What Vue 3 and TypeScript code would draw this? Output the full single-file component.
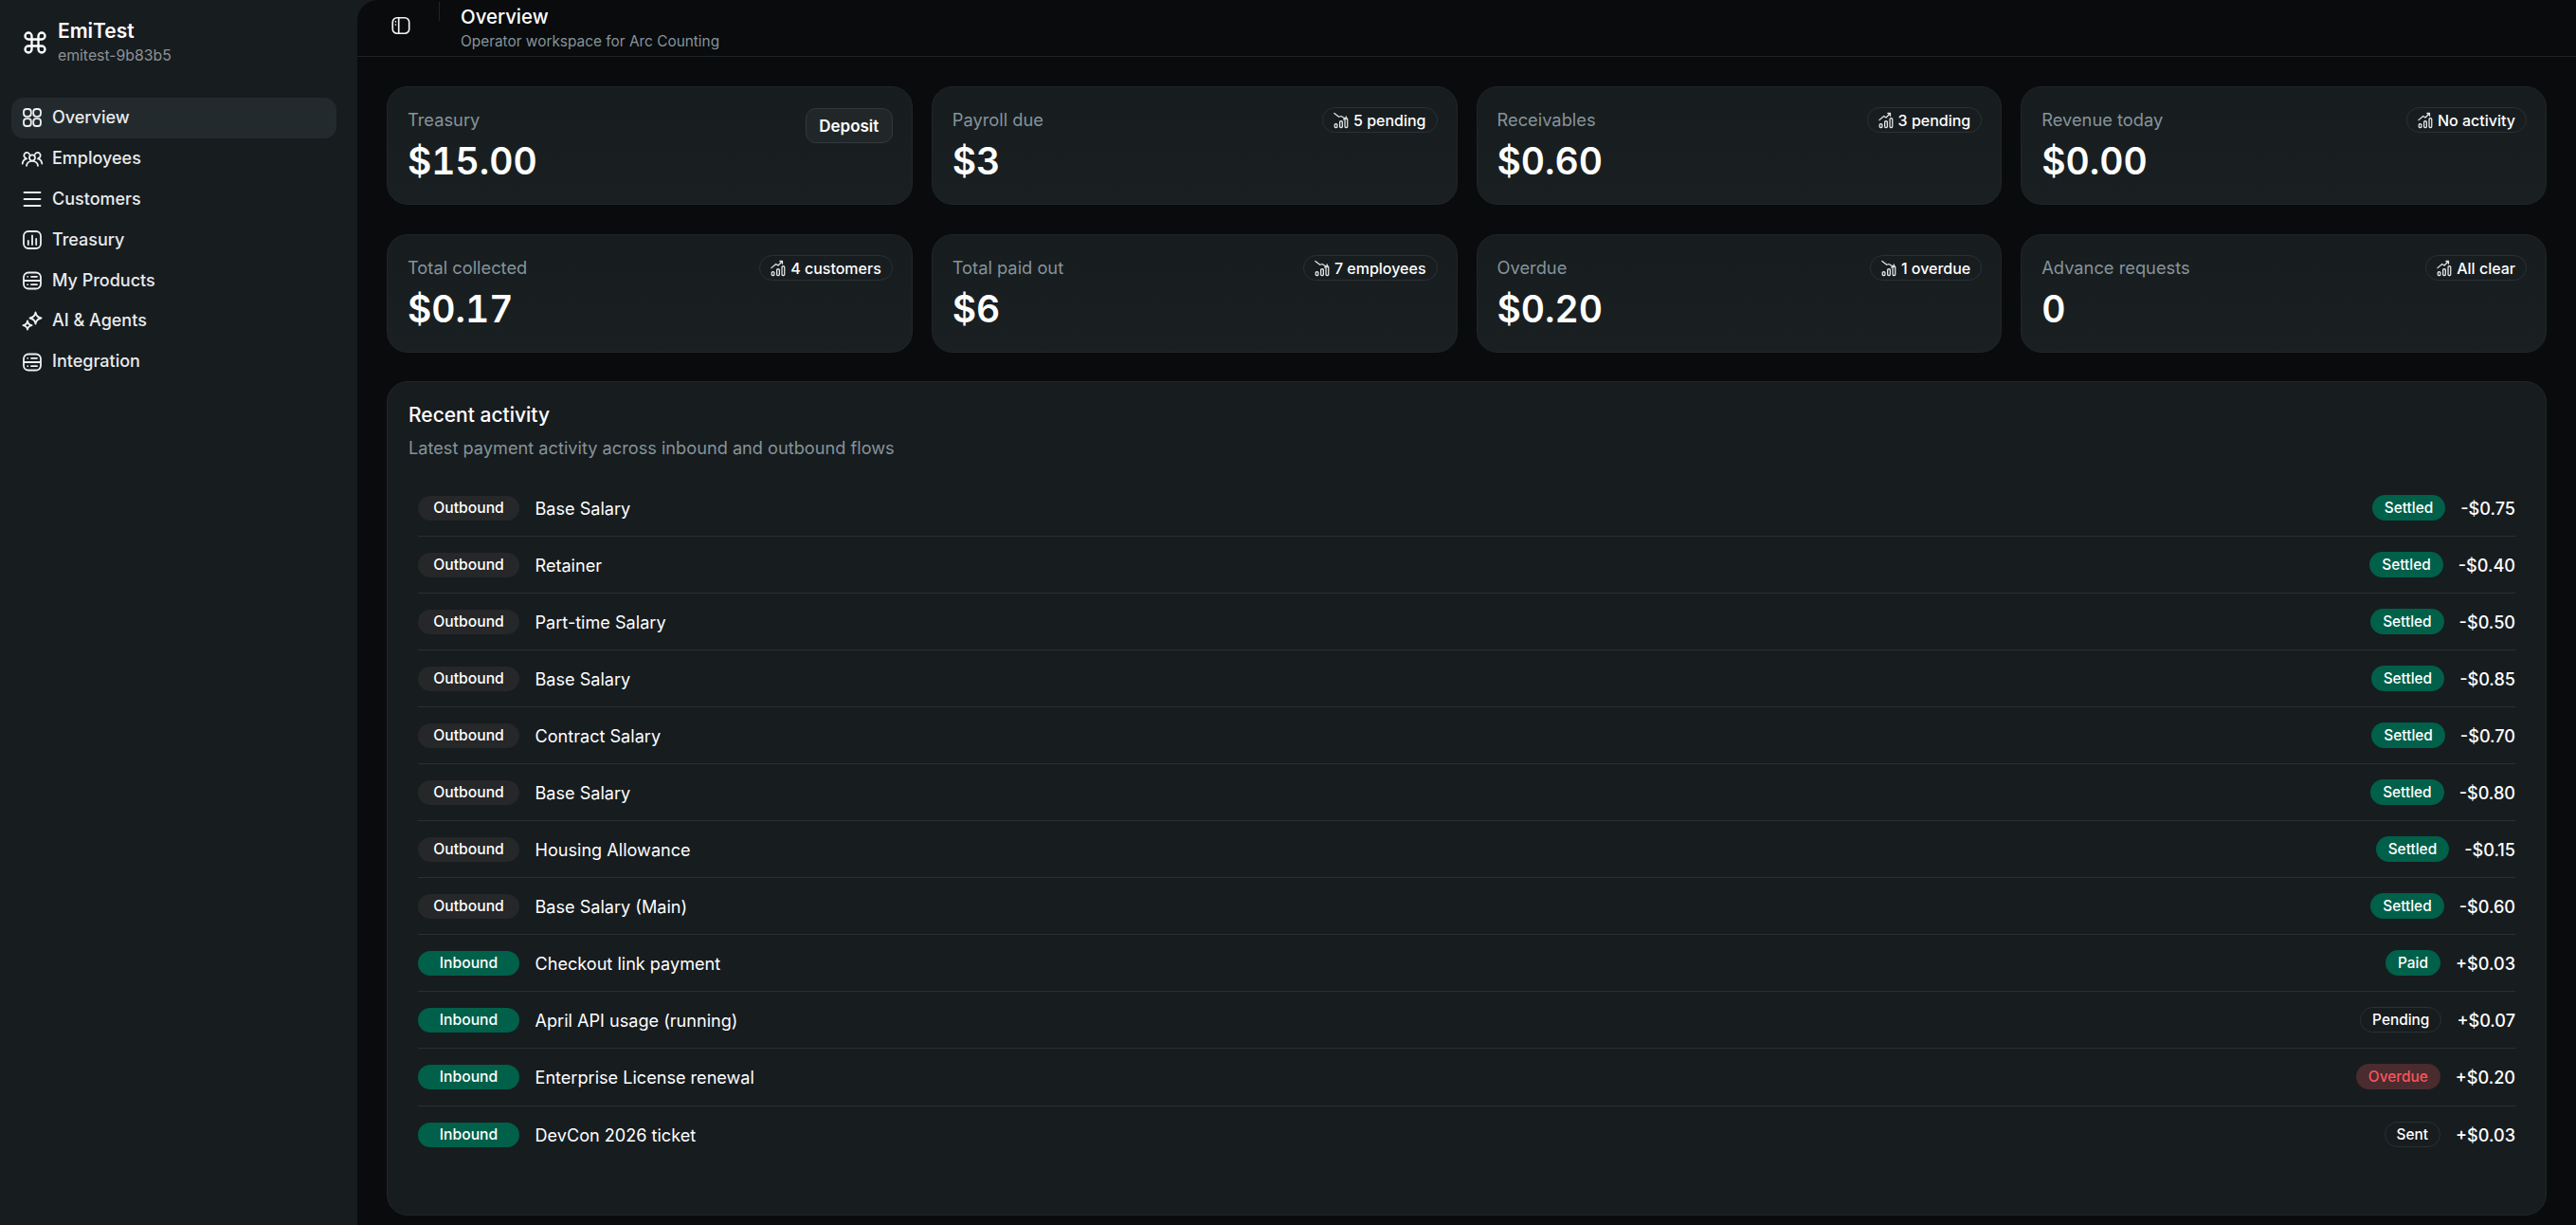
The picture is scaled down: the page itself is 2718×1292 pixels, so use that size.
<script setup lang="ts">
type IconName = 'grid' | 'users' | 'menu' | 'chart' | 'server' | 'spark' | 'panel' | 'up' | 'down' | 'command'

const rr = (x: number, y: number, w: number, h: number, r: number): string =>
  `M${x + r} ${y}h${w - 2 * r}a${r} ${r} 0 0 1 ${r} ${r}v${h - 2 * r}a${r} ${r} 0 0 1 ${-r} ${r}h${-(w - 2 * r)}a${r} ${r} 0 0 1 ${-r} ${-r}v${-(h - 2 * r)}a${r} ${r} 0 0 1 ${r} ${-r}z`

const bars = rr(3, 17, 3.6, 5, 1.4) + rr(10.2, 13, 3.6, 9, 1.4) + rr(17.4, 9, 3.6, 13, 1.4)

const icons: Record<IconName, string> = {
  grid: rr(3, 3, 7.8, 7.8, 3) + rr(13.2, 3, 7.8, 7.8, 3) + rr(3, 13.2, 7.8, 7.8, 3) + rr(13.2, 13.2, 7.8, 7.8, 3),
  users:
    'M12 8.4a3 3 0 1 0 0 6 3 3 0 0 0 0-6zM6 19.8c.3-3 2.9-4.9 6-4.9s5.7 1.9 6 4.9M9 7.6a3 3 0 1 0-3.6 4.2M15 7.6a3 3 0 1 1 3.6 4.2M1.7 17.6c.3-2.6 2-4.6 4.4-5.2M22.3 17.6c-.3-2.6-2-4.6-4.4-5.2',
  menu: 'M3.5 5h17M3.5 12h17M3.5 19h17',
  chart: rr(3, 3, 18, 18, 5) + 'M7.8 17v-4M12 17V7.5M16.2 17v-6',
  server: rr(3, 3.5, 18, 17, 5) + 'M3 12h18M7.2 7.8h.01M7.2 16.2h.01M11 7.8h6M11 16.2h6',
  spark:
    'M15.5 2.5c.5 3.3 2.6 5.4 6 6-3.4.6-5.5 2.7-6 6-.5-3.3-2.6-5.4-6-6 3.4-.6 5.5-2.7 6-6zM7 11.5c.4 2.6 2 4.2 4.6 4.6-2.6.4-4.2 2-4.6 4.6-.4-2.6-2-4.2-4.6-4.6 2.6-.4 4.2-2 4.6-4.6z',
  panel: rr(2.5, 3, 19, 18, 5) + 'M9.5 3v18M6 7.5h.01M6 11h.01',
  up: bars + 'M2.5 11.5 9 6l3 2 6-6M14.5 2H18v3.5',
  down: bars + 'M2.5 2 9 7l3-1 7 4M15.5 10.5 19 10V6.5',
  command:
    'M15 6v12a3 3 0 1 0 3-3H6a3 3 0 1 0 3 3V6a3 3 0 1 0-3 3h12a3 3 0 1 0-3-3',
}

const nav: { label: string; icon: IconName; active?: boolean }[] = [
  { label: 'Overview', icon: 'grid', active: true },
  { label: 'Employees', icon: 'users' },
  { label: 'Customers', icon: 'menu' },
  { label: 'Treasury', icon: 'chart' },
  { label: 'My Products', icon: 'server' },
  { label: 'AI & Agents', icon: 'spark' },
  { label: 'Integration', icon: 'server' },
]

const stats: { label: string; value: string; badge?: string; icon?: IconName }[] = [
  { label: 'Treasury', value: '$15.00' },
  { label: 'Payroll due', value: '$3', badge: '5 pending', icon: 'down' },
  { label: 'Receivables', value: '$0.60', badge: '3 pending', icon: 'up' },
  { label: 'Revenue today', value: '$0.00', badge: 'No activity', icon: 'up' },
  { label: 'Total collected', value: '$0.17', badge: '4 customers', icon: 'up' },
  { label: 'Total paid out', value: '$6', badge: '7 employees', icon: 'down' },
  { label: 'Overdue', value: '$0.20', badge: '1 overdue', icon: 'down' },
  { label: 'Advance requests', value: '0', badge: 'All clear', icon: 'up' },
]

const rows: { dir: string; name: string; status: string; amount: string }[] = [
  { dir: 'Outbound', name: 'Base Salary', status: 'Settled', amount: '-$0.75' },
  { dir: 'Outbound', name: 'Retainer', status: 'Settled', amount: '-$0.40' },
  { dir: 'Outbound', name: 'Part-time Salary', status: 'Settled', amount: '-$0.50' },
  { dir: 'Outbound', name: 'Base Salary', status: 'Settled', amount: '-$0.85' },
  { dir: 'Outbound', name: 'Contract Salary', status: 'Settled', amount: '-$0.70' },
  { dir: 'Outbound', name: 'Base Salary', status: 'Settled', amount: '-$0.80' },
  { dir: 'Outbound', name: 'Housing Allowance', status: 'Settled', amount: '-$0.15' },
  { dir: 'Outbound', name: 'Base Salary (Main)', status: 'Settled', amount: '-$0.60' },
  { dir: 'Inbound', name: 'Checkout link payment', status: 'Paid', amount: '+$0.03' },
  { dir: 'Inbound', name: 'April API usage (running)', status: 'Pending', amount: '+$0.07' },
  { dir: 'Inbound', name: 'Enterprise License renewal', status: 'Overdue', amount: '+$0.20' },
  { dir: 'Inbound', name: 'DevCon 2026 ticket', status: 'Sent', amount: '+$0.03' },
]
</script>

<template>
  <div class="app">
    <aside class="sidebar">
      <div class="brand">
        <svg class="brand-icon" viewBox="0 0 24 24" fill="none"><path :d="icons.command" /></svg>
        <div>
          <div class="brand-name">EmiTest</div>
          <div class="brand-slug">emitest-9b83b5</div>
        </div>
      </div>
      <nav class="nav">
        <a v-for="item in nav" :key="item.label" class="nav-item" :class="{ active: item.active }">
          <svg class="nav-icon" viewBox="0 0 24 24" fill="none"><path :d="icons[item.icon]" /></svg>
          <span class="nav-label">{{ item.label }}</span>
        </a>
      </nav>
    </aside>

    <main class="main">
      <header class="topbar">
        <svg class="toggle" viewBox="0 0 24 24" fill="none"><path :d="icons.panel" /></svg>
        <span class="separator"></span>
        <div class="titles">
          <div class="title">Overview</div>
          <div class="subtitle">Operator workspace for Arc Counting</div>
        </div>
      </header>

      <div class="content">
        <section class="stats">
          <article v-for="s in stats" :key="s.label" class="card">
            <div>
              <div class="card-label">{{ s.label }}</div>
              <div class="card-value">{{ s.value }}</div>
            </div>
            <span v-if="s.badge" class="badge">
              <svg class="badge-icon" viewBox="0 0 24 24" fill="none"><path :d="icons[s.icon ?? 'up']" /></svg>
              {{ s.badge }}
            </span>
            <button v-else class="deposit">Deposit</button>
          </article>
        </section>

        <section class="panel">
          <h2 class="panel-title">Recent activity</h2>
          <p class="panel-sub">Latest payment activity across inbound and outbound flows</p>
          <ul class="list">
            <li v-for="(r, i) in rows" :key="i" class="row">
              <span class="dir" :class="r.dir.toLowerCase()">{{ r.dir }}</span>
              <span class="name">{{ r.name }}</span>
              <span class="status" :class="r.status.toLowerCase()">{{ r.status }}</span>
              <span class="amount">{{ r.amount }}</span>
            </li>
          </ul>
        </section>
      </div>
    </main>
  </div>
</template>

<style>
html,
body {
  margin: 0;
  background: #171c1f;
}
</style>

<style scoped>
.app {
  display: flex;
  height: 100vh;
  overflow: hidden;
  background: #171c1f;
  color: #fff;
  font-family: Inter, "Noto Sans", sans-serif;
}
.sidebar {
  width: 377px;
  flex: none;
  box-sizing: border-box;
  padding: 0 22px 0 12px;
}
.brand {
  display: flex;
  align-items: center;
  gap: 10px;
  height: 103px;
  padding: 0 0 14px 11px;
  box-sizing: border-box;
}
.brand-icon {
  width: 28px;
  height: 28px;
  flex: none;
  stroke: #fff;
  stroke-width: 2;
  stroke-linecap: round;
  stroke-linejoin: round;
}
.brand-name {
  font-size: 21px;
  line-height: 28px;
  font-weight: 600;
  padding-top: 1px;
}
.brand-slug {
  font-size: 15.8px;
  line-height: 24px;
  color: #8b9194;
}
.nav {
  display: flex;
  flex-direction: column;
}
.nav-item {
  display: flex;
  align-items: center;
  gap: 9px;
  height: 42.9px;
  padding-left: 10px;
  border-radius: 13px;
  font-size: 18px;
  font-weight: 500;
  color: #e9ebec;
}
.nav-item.active {
  background: #232a2d;
}
.nav-label {
  margin-top: -2px;
}
.nav-icon {
  width: 24px;
  height: 24px;
  flex: none;
  stroke: #eef0f1;
  stroke-width: 1.8;
  stroke-linecap: round;
  stroke-linejoin: round;
}
.main {
  flex: 1;
  min-width: 0;
  display: flex;
  flex-direction: column;
  background: #090b0d;
  border-top-left-radius: 22px;
}
.topbar {
  display: flex;
  align-items: flex-start;
  flex: none;
  height: 60px;
  box-sizing: border-box;
  border-bottom: 1px solid #1f2426;
  padding-left: 34.5px;
}
.toggle {
  width: 22px;
  height: 22px;
  margin-top: 16px;
  flex: none;
  stroke: #f2f3f4;
  stroke-width: 1.8;
  stroke-linecap: round;
  stroke-linejoin: round;
}
.separator {
  width: 1px;
  height: 20px;
  margin: 2px 0 0 29.5px;
  background: #202527;
  flex: none;
}
.titles {
  margin-left: 22px;
}
.title {
  font-size: 20.4px;
  line-height: 28px;
  margin-top: 4px;
  font-weight: 500;
}
.subtitle {
  font-size: 15.4px;
  line-height: 22px;
  margin-top: 1px;
  color: #85949a;
}
.content {
  flex: 1;
  min-height: 0;
  display: flex;
  flex-direction: column;
  gap: 30px;
  padding: 31px 31px 10px;
}
.stats {
  display: grid;
  grid-template-columns: repeat(4, 1fr);
  column-gap: 20px;
  row-gap: 31px;
}
.card {
  display: flex;
  justify-content: space-between;
  align-items: flex-start;
  box-sizing: border-box;
  height: 125px;
  padding: 21px 20px 0 21px;
  background: linear-gradient(180deg, #171c1f, #1a2022);
  border: 1px solid #1f2528;
  border-radius: 22px;
}
.card-label {
  font-size: 18.3px;
  line-height: 26px;
  color: #85949a;
}
.card-value {
  font-size: 39px;
  line-height: 48px;
  margin-top: 7px;
  font-weight: 600;
  font-feature-settings: "tnum";
}
.badge {
  display: inline-flex;
  align-items: center;
  gap: 4px;
  height: 27px;
  box-sizing: border-box;
  padding: 0 11px 0 10px;
  border: 1px solid #2a3033;
  border-radius: 14px;
  font-size: 16px;
  font-weight: 500;
  white-space: nowrap;
}
.badge-icon {
  width: 18px;
  height: 18px;
  stroke: #e4e6e7;
  stroke-width: 1.7;
  stroke-linecap: round;
  stroke-linejoin: round;
}
.deposit {
  height: 37px;
  width: 92px;
  margin-top: 1px;
  border: 1px solid #32383b;
  border-radius: 11px;
  background: #212729;
  color: #fff;
  font: 600 17px Inter, sans-serif;
  padding: 0;
}
.panel {
  flex: 1;
  min-height: 0;
  box-sizing: border-box;
  background: #171c1f;
  border: 1px solid #202528;
  border-radius: 22px;
  padding: 21px 32px 0 22px;
}
.panel-title {
  margin: 0;
  font-size: 21px;
  line-height: 28px;
  font-weight: 500;
}
.panel-sub {
  margin: 6px 0 0;
  font-size: 18.2px;
  line-height: 28px;
  color: #85949a;
}
.list {
  list-style: none;
  margin: 20px 0 0 10px;
  padding: 0;
}
.row {
  display: flex;
  align-items: center;
  gap: 16px;
  box-sizing: border-box;
  height: 60.05px;
  border-bottom: 1px solid #2a2f32;
}
.row:last-child {
  border-bottom: 0;
}
.dir {
  width: 107px;
  height: 26px;
  line-height: 26px;
  flex: none;
  text-align: center;
  border-radius: 13px;
  font-size: 15.7px;
  font-weight: 500;
}
.dir.outbound {
  background: #252729;
}
.dir.inbound {
  background: #00604a;
}
.name {
  flex: 1;
  font-size: 18.1px;
  font-weight: 400;
  margin-left: 0.5px;
}
.status {
  height: 27px;
  line-height: 25px;
  box-sizing: border-box;
  padding: 0 12px;
  border: 1px solid transparent;
  border-radius: 14px;
  font-size: 15.4px;
  font-weight: 500;
}
.status.settled,
.status.paid {
  background: #00604a;
}
.status.pending,
.status.sent {
  border-color: #2a3033;
}
.status.overdue {
  background: #4a2b2e;
  color: #f8555c;
}
.amount {
  font-size: 18.1px;
  font-weight: 500;
  white-space: nowrap;
}
</style>
